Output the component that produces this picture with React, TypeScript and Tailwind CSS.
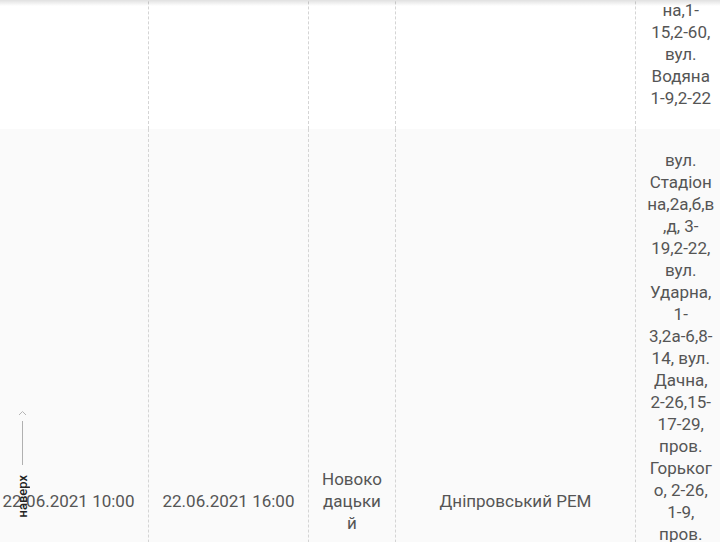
import React from 'react';

type Row = {
  start: string;
  end: string;
  area: string;
  rem: string;
  streets: string;
  striped?: boolean;
};

const ROWS: Row[] = [
  {
    start: '22.06.2021 09:00',
    end: '22.06.2021 17:00',
    area: 'Новокодацький',
    rem: 'Дніпровський РЕМ',
    streets:
      'вул. Лісова, 1-17, 2-12, вул. Миру, 3-9, 2-16, вул. Шкільна, 1-21, 2-18, вул. Садова, 1-7, 2-14, пров. Тихий, 1-5, 2-8, вул. Стадіонна,1-15,2-60, вул. Водяна 1-9,2-22',
  },
  {
    start: '22.06.2021 10:00',
    end: '22.06.2021 16:00',
    area: 'Новокодацький',
    rem: 'Дніпровський РЕМ',
    streets:
      'вул. Стадіонна,2а,б,в,д, 3-19,2-22, вул. Ударна, 1-3,2а-6,8-14, вул. Дачна, 2-26,15-17-29, пров. Горького, 2-26, 1-9, пров. Садовий, 1-11, 2-8, вул. Шкільна, 1-25, 2-30, вул. Миру, 3-17, 4-20, вул. Польова, 1-9, 2-14, вул. Лісова, 1-9',
    striped: true,
  },
];

const cell = 'border-l border-dashed border-[#d4d4d4] px-[11px] py-[20px] text-center align-middle';

export default function App() {
  return (
    <div className="relative w-[720px] h-[542px] overflow-hidden bg-white font-['Roboto',sans-serif] text-[17px] leading-[22px] text-[#555]">
      <table className="table-fixed border-collapse -ml-[12px] -mt-[417px] w-[737px]">
        <colgroup>
          <col className="w-[160px]" />
          <col className="w-[160px]" />
          <col className="w-[87px]" />
          <col className="w-[240px]" />
          <col className="w-[90px]" />
        </colgroup>
        <tbody>
          {ROWS.map((r, i) => (
            <tr key={i} className={r.striped ? 'bg-[#fafafa]' : 'bg-white'}>
              <td className={`${cell} whitespace-nowrap`}>{r.start}</td>
              <td className={`${cell} whitespace-nowrap`}>{r.end}</td>
              <td className={`${cell} break-words`}>{r.area}</td>
              <td className={cell}>{r.rem}</td>
              <td className={`${cell} break-words`}>{r.streets}</td>
            </tr>
          ))}
        </tbody>
      </table>

      {/* shadow from the sticky header above */}
      <div className="absolute inset-x-0 top-0 h-[6px] bg-linear-to-b from-black/[0.12] to-transparent" />

      {/* scroll-to-top widget */}
      <div className="absolute left-[16px] top-[410px] flex flex-col items-center w-[13px]">
        <svg width="9" height="6" viewBox="0 0 9 6" fill="none" className="mb-[5px]">
          <polyline points="1,5 4.5,1.5 8,5" stroke="#b5b5b5" strokeWidth="1" />
        </svg>
        <div className="w-px h-[44px] bg-[#b0b0b0]" />
        <span className="mt-[10px] [writing-mode:vertical-rl] rotate-180 text-[13px] leading-[13px] font-medium text-[#222]">
          наверх
        </span>
      </div>
    </div>
  );
}
